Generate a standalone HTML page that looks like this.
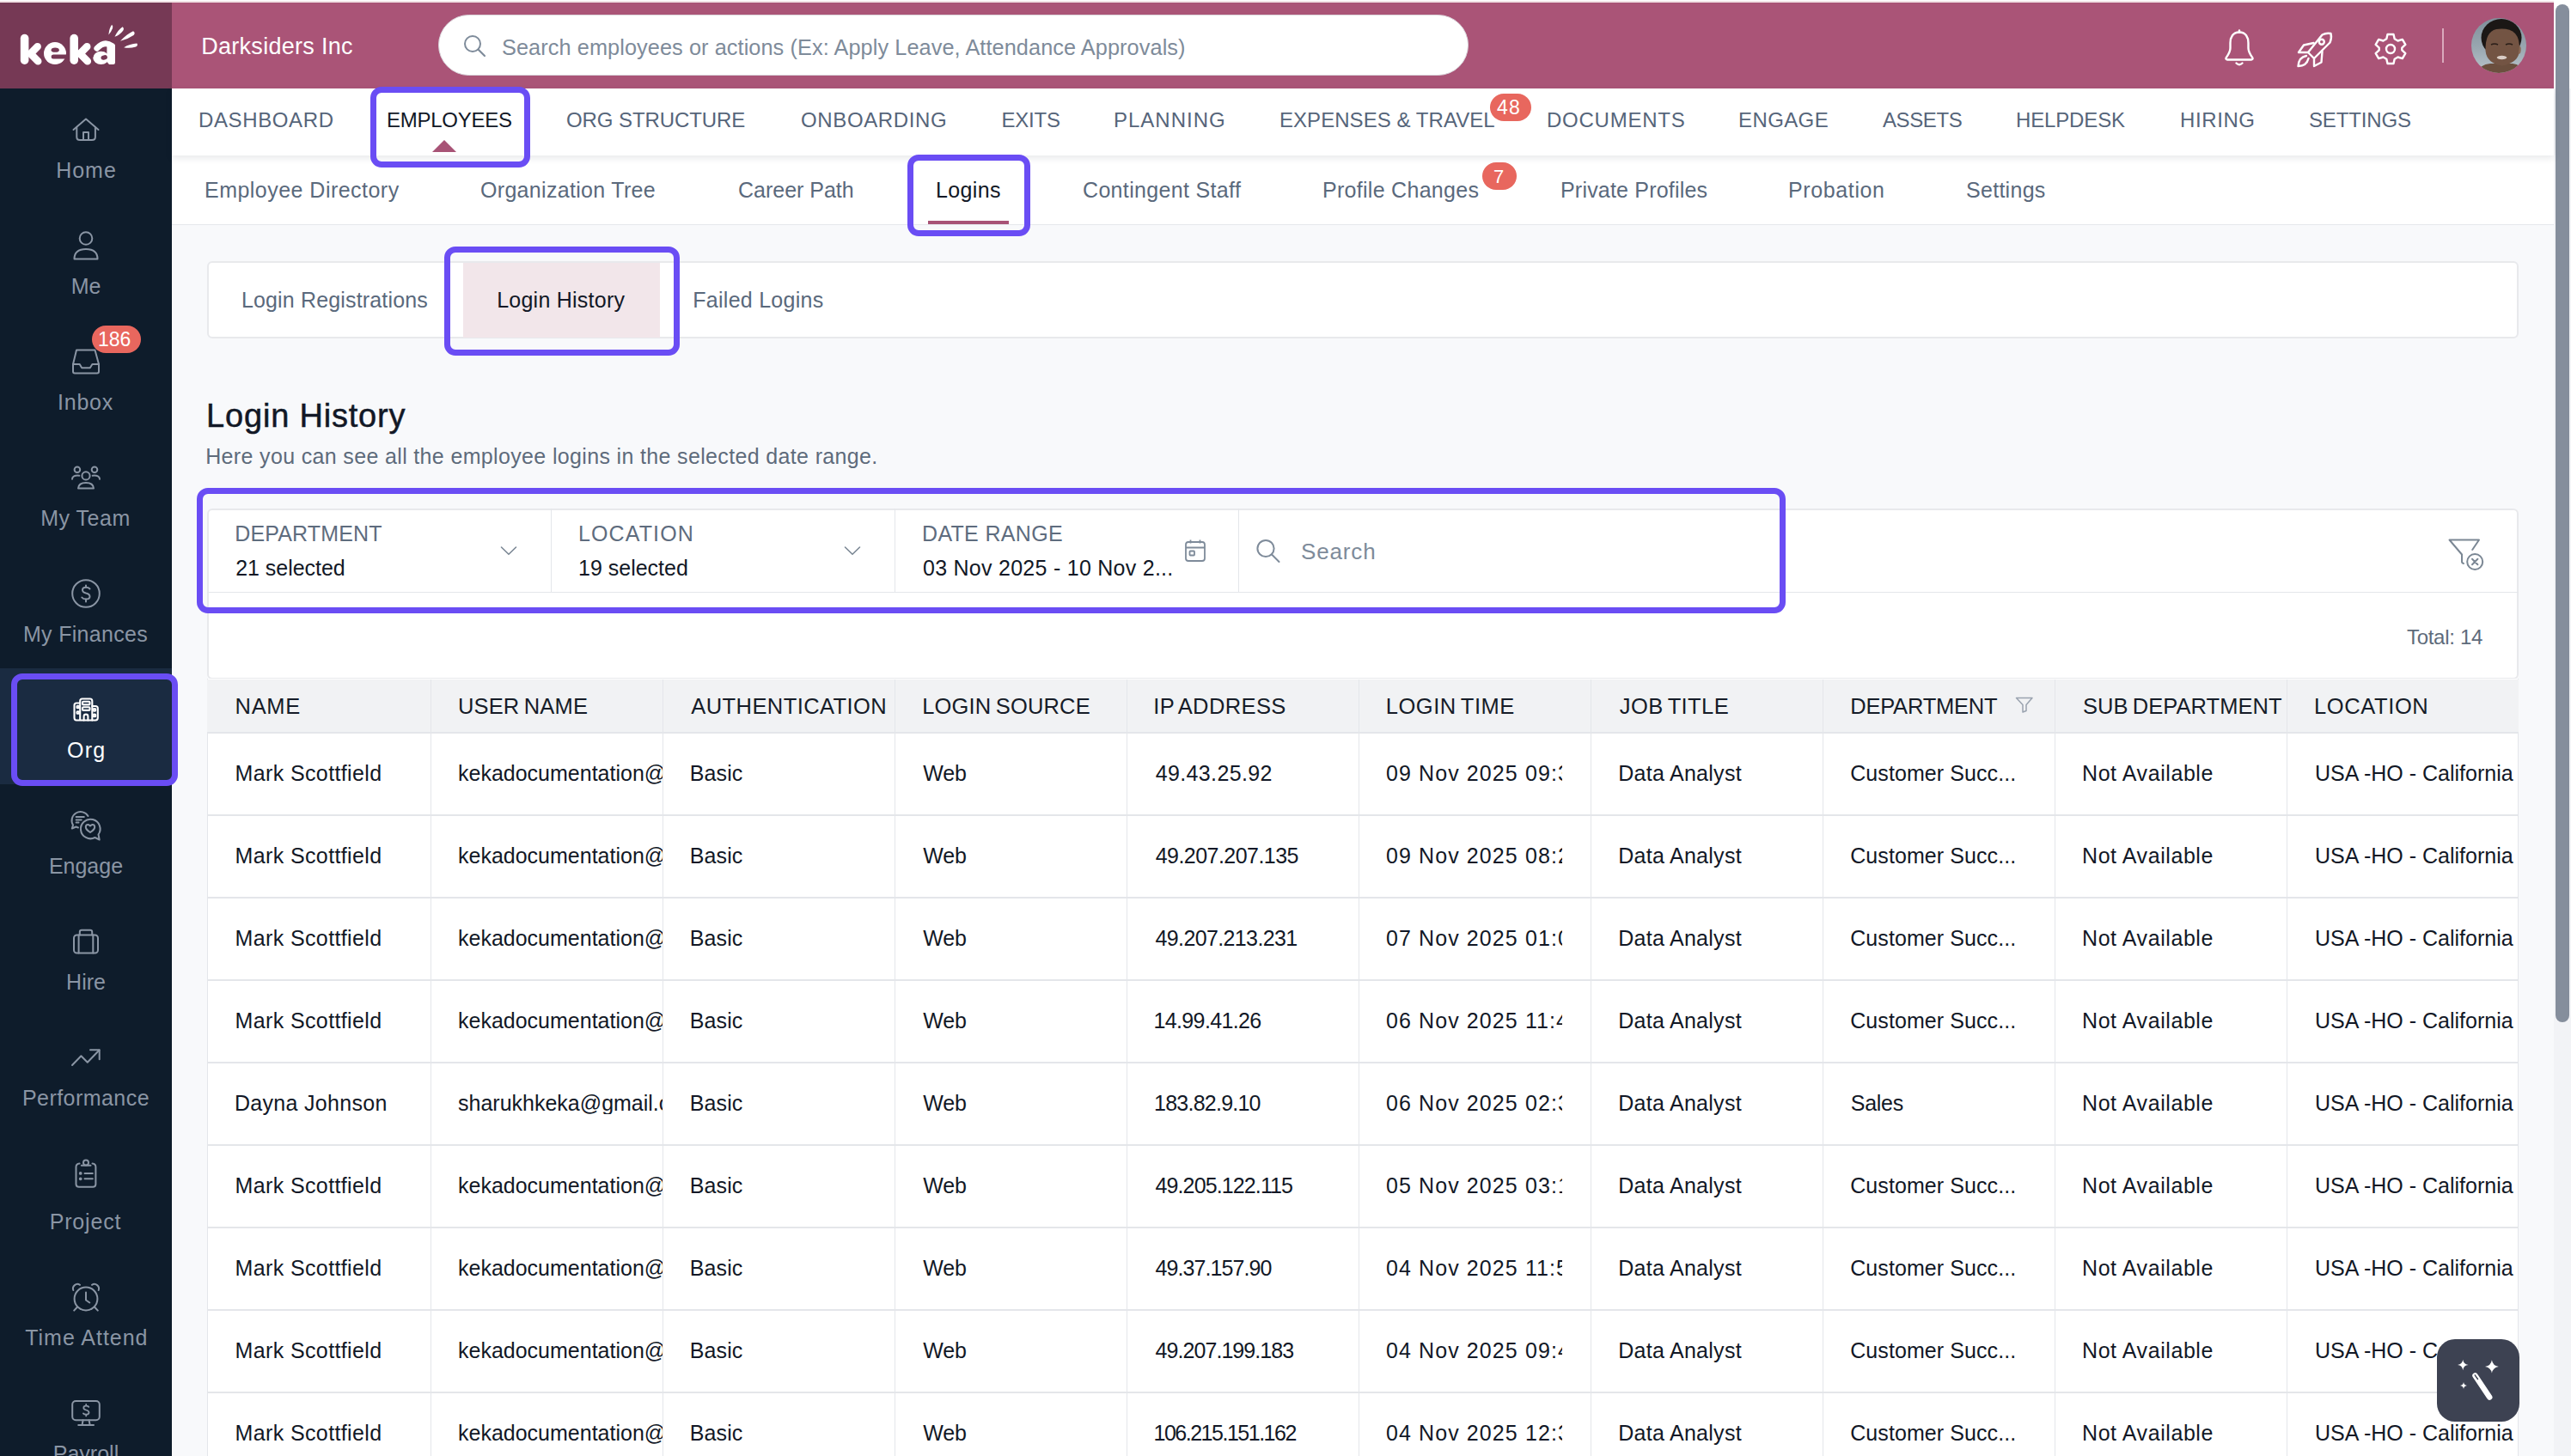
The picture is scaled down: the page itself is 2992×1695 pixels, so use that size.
<!DOCTYPE html>
<html><head><meta charset="utf-8"><title>Login History</title><style>
*{box-sizing:border-box;margin:0;padding:0}
html,body{width:2992px;height:1695px;overflow:hidden;background:#F8F9FB;font-family:"Liberation Sans",sans-serif;}
.a{position:absolute}
.t{position:absolute;white-space:nowrap;line-height:1}
svg{position:absolute;overflow:visible}
</style></head><body>
<div class="a" style="left:0px;top:0px;width:2992px;height:3px;background:linear-gradient(#fff 0,#fff 1px,#F2E2E5 1px)"></div>
<div class="a" style="left:0px;top:3px;width:200px;height:100px;background:#763955"></div>
<div class="a" style="left:200px;top:3px;width:2772px;height:100px;background:#AA5477"></div>
<svg style="left:0;top:0" width="200" height="103" viewBox="0 0 200 103">
<g stroke="#fff" stroke-linecap="round" stroke-linejoin="round" fill="none">
<path d="M28.6 44.6 V70.2" stroke-width="9.6"/>
<path d="M43.6 54.2 L35.5 62.5 L44.2 71.2" stroke-width="8.6"/>
<path d="M86.2 44.6 V70.2" stroke-width="9.6"/>
<path d="M101.2 54.2 L93.1 62.5 L101.8 71.2" stroke-width="8.6"/>
</g>
<g fill="#fff">
<circle cx="64" cy="62.1" r="13"/>
<ellipse cx="117.6" cy="67.4" rx="9.3" ry="7.6"/>
<path d="M124.4 53 H134 V72.8 Q134 75 131.8 75 H127 Q125 73.5 124.4 71 Z"/>
</g>
<path d="M112.8 56.3 Q121.5 46.8 130.5 53.5" stroke="#fff" stroke-width="6.8" fill="none" stroke-linecap="round"/>
<g fill="#763955">
<ellipse cx="64.2" cy="58.2" rx="4.6" ry="2.6"/>
<path d="M62 63.6 H80 V68.6 H62 Q59.6 68.6 59.6 66.1 Q59.6 63.6 62 63.6Z"/>
<ellipse cx="121.2" cy="66.9" rx="3.8" ry="2.6" transform="rotate(-15 121.2 66.9)"/>
</g>
<g fill="#fff">
<path d="M126.4 40.5 Q127 33 130.1 28.7 Q132 30 131 33 Q129 38 126.4 40.5Z"/>
<path d="M133.5 42.7 Q137 35 142.6 31.2 Q145 33 143 36 Q139 41 133.5 42.7Z"/>
<path d="M140 47.7 Q147 40 155 36.2 Q158 38 155.5 41 Q149 45.5 140 47.7Z"/>
<path d="M144.1 55.2 Q151 51 159.4 50.5 Q161 53 158 54.5 Q151 56.5 144.1 55.2Z"/>
</g></svg>
<div class="t" style="left:234.2px;top:41.0px;font-size:27px;color:#fff;letter-spacing:0.288px;">Darksiders Inc</div>
<div class="a" style="left:510px;top:17px;width:1199px;height:71px;background:#fff;border-radius:36px;border:1px solid #D9D4DA"></div>
<svg style="left:539px;top:40px" width="26" height="26" viewBox="0 0 26 26"><circle cx="11" cy="11" r="9" fill="none" stroke="#7E8B9A" stroke-width="2"/><path d="M17.5 17.5 L25 25" stroke="#7E8B9A" stroke-width="2.2" stroke-linecap="round"/></svg>
<div class="t" style="left:584.0px;top:42.5px;font-size:25.3px;color:#7E8B9A;letter-spacing:0.079px;">Search employees or actions (Ex: Apply Leave, Attendance Approvals)</div>
<svg style="left:2588px;top:34px" width="36" height="44" viewBox="0 0 36 44" fill="none" stroke="#fff" stroke-width="2.4" stroke-linejoin="round" stroke-linecap="round">
<path d="M18 3.5 V1.5"/><path d="M18 3.5 C10.5 3.5 7.5 9.5 7.5 16 V22 C7.5 27 4 31 2.5 33.5 C2.2 34.5 2.8 35.5 4 35.5 H32 C33.2 35.5 33.8 34.5 33.5 33.5 C32 31 28.5 27 28.5 22 V16 C28.5 9.5 25.5 3.5 18 3.5Z"/><path d="M14.5 39.5 Q18 43 21.5 39.5"/></svg>
<svg style="left:2673px;top:37px" width="42" height="42" viewBox="0 0 42 42" fill="none" stroke="#fff" stroke-width="2.4" stroke-linejoin="round" stroke-linecap="round">
<path d="M13 24 L20 31 L38.5 12.5 C40.5 8 40 4 39.5 2 C37 1.5 33 1.5 29.5 3.5 Z"/><circle cx="28.8" cy="11.8" r="3"/><path d="M13 24 L2 24 L8 15.5 L19.5 13"/><path d="M20 31 L20 40 L28.5 35.5 L29.5 23"/><path d="M11 28 C5 29 2 33 1.5 40 C8 40 12 37 13.5 31"/></svg>
<svg style="left:2764px;top:38px" width="36" height="38" viewBox="0 0 36 38" fill="none" stroke="#fff" stroke-width="2.4" stroke-linejoin="round">
<path d="M14.5 2 H21.5 L22.7 7.3 L26.5 9.5 L31.8 7.9 L35.3 13.9 L31.3 17.7 V20.3 L35.3 24.1 L31.8 30.1 L26.5 28.5 L22.7 30.7 L21.5 36 H14.5 L13.3 30.7 L9.5 28.5 L4.2 30.1 L0.7 24.1 L4.7 20.3 V17.7 L0.7 13.9 L4.2 7.9 L9.5 9.5 L13.3 7.3 Z"/><circle cx="18" cy="19" r="5"/></svg>
<div class="a" style="left:2842px;top:33px;width:2px;height:40px;background:#D9A9BC"></div>
<svg style="left:2876px;top:21px" width="64" height="64" viewBox="0 0 64 64"><defs><clipPath id="av"><circle cx="32" cy="32" r="32"/></clipPath><linearGradient id="avbg" x1="0" y1="0" x2="0" y2="1"><stop offset="0" stop-color="#7F8F9A"/><stop offset="0.55" stop-color="#9AA8B1"/><stop offset="1" stop-color="#B9C5CC"/></linearGradient></defs>
<g clip-path="url(#av)"><rect width="64" height="64" fill="url(#avbg)"/>
<path d="M6 64 Q10 54 22 53 H48 Q58 54 62 64Z" fill="#6B4F3E"/>
<ellipse cx="35" cy="23" rx="23.5" ry="22" fill="#1B1715"/>
<path d="M16.5 38 Q16 16 29 13 Q44 11 51 18 Q56.5 24 56 38 Q55 52 36 55.5 Q18 53 16.5 38Z" fill="#735443"/>
<path d="M56 32 Q59 34 57 41 L55 42Z" fill="#8A6A55"/>
<path d="M23 31 Q27 29 31 31 M40 31 Q44 29 48 31" stroke="#2A1E18" stroke-width="1.6" fill="none"/>
<ellipse cx="35.5" cy="46" rx="5.8" ry="2.2" fill="#D9CCC5"/>
</g></svg>
<div class="a" style="left:2972px;top:0px;width:20px;height:1695px;background:#F2F3F6"></div>
<div class="a" style="left:2972px;top:0px;width:20px;height:103px;background:#fff"></div>
<div class="a" style="left:2974px;top:5px;width:16px;height:1185px;background:#858E9C;border-radius:8px"></div>
<div class="a" style="left:0px;top:103px;width:200px;height:1592px;background:#0E1C2B"></div>
<div class="a" style="left:200px;top:181px;width:2772px;height:81px;background:#fff;border-bottom:1px solid #E6E8EC"></div>
<div class="a" style="left:200px;top:103px;width:2772px;height:78px;background:#fff;box-shadow:0 3px 8px rgba(20,30,50,0.10);z-index:2"></div>
<div class="t" style="left:231.0px;top:127.6px;font-size:24px;color:#56657A;letter-spacing:0.625px;z-index:3;">DASHBOARD</div>
<div class="t" style="left:450.0px;top:127.6px;font-size:24px;color:#121826;letter-spacing:-0.25px;z-index:3;">EMPLOYEES</div>
<div class="t" style="left:659.0px;top:127.6px;font-size:24px;color:#56657A;letter-spacing:-0.083px;z-index:3;">ORG STRUCTURE</div>
<div class="t" style="left:932.0px;top:127.6px;font-size:24px;color:#56657A;letter-spacing:0.638px;z-index:3;">ONBOARDING</div>
<div class="t" style="left:1165.4px;top:127.6px;font-size:24px;color:#56657A;letter-spacing:-0.2px;z-index:3;">EXITS</div>
<div class="t" style="left:1296.0px;top:127.6px;font-size:24px;color:#56657A;letter-spacing:1.0px;z-index:3;">PLANNING</div>
<div class="t" style="left:1489.0px;top:127.6px;font-size:24px;color:#56657A;letter-spacing:0.05px;z-index:3;">EXPENSES &amp; TRAVEL</div>
<div class="t" style="left:1800.0px;top:127.6px;font-size:24px;color:#56657A;letter-spacing:0.75px;z-index:3;">DOCUMENTS</div>
<div class="t" style="left:2023.0px;top:127.6px;font-size:24px;color:#56657A;letter-spacing:0.4px;z-index:3;">ENGAGE</div>
<div class="t" style="left:2191.0px;top:127.6px;font-size:24px;color:#56657A;letter-spacing:-0.4px;z-index:3;">ASSETS</div>
<div class="t" style="left:2346.0px;top:127.6px;font-size:24px;color:#56657A;letter-spacing:-0.143px;z-index:3;">HELPDESK</div>
<div class="t" style="left:2537.0px;top:127.6px;font-size:24px;color:#56657A;letter-spacing:0.6px;z-index:3;">HIRING</div>
<div class="t" style="left:2687.0px;top:127.6px;font-size:24px;color:#56657A;letter-spacing:-0.143px;z-index:3;">SETTINGS</div>
<svg style="left:503px;top:163px;z-index:3" width="28" height="14" viewBox="0 0 28 14"><path d="M14 0 L28 14 H0Z" fill="#A85376"/></svg>
<div class="a" style="left:1734px;top:109px;width:48px;height:32px;border-radius:16px;background:#E8675E;z-index:3"></div>
<div class="t" style="left:1742.0px;top:114.0px;font-size:23px;color:#fff;letter-spacing:1.2px;z-index:4;">48</div>
<div class="t" style="left:238.0px;top:209.2px;font-size:25px;color:#5A697C;letter-spacing:0.471px;">Employee Directory</div>
<div class="t" style="left:559.0px;top:209.2px;font-size:25px;color:#5A697C;letter-spacing:0.312px;">Organization Tree</div>
<div class="t" style="left:859.0px;top:209.2px;font-size:25px;color:#5A697C;letter-spacing:-0.01px;">Career Path</div>
<div class="t" style="left:1089.0px;top:209.2px;font-size:25px;color:#121826;letter-spacing:0.35px;">Logins</div>
<div class="t" style="left:1260.0px;top:209.2px;font-size:25px;color:#5A697C;letter-spacing:0.333px;">Contingent Staff</div>
<div class="t" style="left:1539.0px;top:209.2px;font-size:25px;color:#5A697C;letter-spacing:0.286px;">Profile Changes</div>
<div class="t" style="left:1816.0px;top:209.2px;font-size:25px;color:#5A697C;letter-spacing:0.2px;">Private Profiles</div>
<div class="t" style="left:2081.0px;top:209.2px;font-size:25px;color:#5A697C;letter-spacing:0.625px;">Probation</div>
<div class="t" style="left:2288.0px;top:209.2px;font-size:25px;color:#5A697C;letter-spacing:0.286px;">Settings</div>
<div class="a" style="left:1080px;top:257px;width:94px;height:4px;background:#A85376"></div>
<div class="a" style="left:1725px;top:189px;width:40px;height:32px;border-radius:16px;background:#E8675E"></div>
<div class="t" style="left:1738.0px;top:195.3px;font-size:22px;color:#fff;">7</div>
<div class="a" style="left:0px;top:778px;width:200px;height:135px;background:#1A2B41"></div>
<div class="t" style="left:0.5px;top:185.8px;font-size:25px;color:#8A95A4;letter-spacing:1.0px;width:200px;text-align:center;">Home</div>
<div class="t" style="left:0.0px;top:320.8px;font-size:25px;color:#8A95A4;width:200px;text-align:center;">Me</div>
<div class="t" style="left:-0.5px;top:456.2px;font-size:25px;color:#8A95A4;letter-spacing:0.75px;width:200px;text-align:center;">Inbox</div>
<div class="t" style="left:-0.5px;top:590.8px;font-size:25px;color:#8A95A4;letter-spacing:0.5px;width:200px;text-align:center;">My Team</div>
<div class="t" style="left:-0.5px;top:726.4px;font-size:25px;color:#8A95A4;letter-spacing:0.3px;width:200px;text-align:center;">My Finances</div>
<div class="t" style="left:0.8px;top:860.8px;font-size:25px;color:#FFFFFF;letter-spacing:1.25px;width:200px;text-align:center;">Org</div>
<div class="t" style="left:0.0px;top:995.8px;font-size:25px;color:#8A95A4;width:200px;text-align:center;">Engage</div>
<div class="t" style="left:0.0px;top:1130.8px;font-size:25px;color:#8A95A4;width:200px;text-align:center;">Hire</div>
<div class="t" style="left:-0.0px;top:1265.8px;font-size:25px;color:#8A95A4;letter-spacing:0.445px;width:200px;text-align:center;">Performance</div>
<div class="t" style="left:-0.5px;top:1409.8px;font-size:25px;color:#8A95A4;letter-spacing:0.834px;width:200px;text-align:center;">Project</div>
<div class="t" style="left:0.9px;top:1544.8px;font-size:25px;color:#8A95A4;letter-spacing:0.98px;width:200px;text-align:center;">Time Attend</div>
<div class="t" style="left:0.0px;top:1679.8px;font-size:25px;color:#8A95A4;width:200px;text-align:center;">Payroll</div>
<svg style="left:0;top:0" width="200" height="1695" viewBox="0 0 200 1695" fill="none" stroke="#8A95A4" stroke-width="2" stroke-linecap="round" stroke-linejoin="round">
<path d="M85.5 151 L100 138.5 L114.5 151"/><path d="M89.3 148.5 V159.5 Q89.3 163 93 163 H107 Q110.9 163 110.9 159.5 V148.5"/><path d="M97 163 V154 H103 V163"/>
<circle cx="100" cy="277.5" r="7.3"/><path d="M86.5 301.5 Q86.5 290 100 290 Q113.5 290 113.5 301.5 Z"/>
<path d="M89 407.5 H110.5 L115 424 V432.5 Q115 434.5 113 434.5 H87 Q85 434.5 85 432.5 V424 Z"/><path d="M85 424 H92.7 L95.2 428.3 H104.8 L107.4 424 H115"/>
<circle cx="89.9" cy="546.8" r="3.3"/><circle cx="110" cy="546.8" r="3.3"/><circle cx="100" cy="553.9" r="4.6"/>
<path d="M92.3 553.7 Q84 553 84 557.8"/><path d="M107.7 553.7 Q116 553 116 557.8"/><path d="M91 568.5 Q91.5 562 100 562 Q108.5 562 109 568.5 Z"/>
<circle cx="100" cy="691" r="15.8"/><path d="M104.5 685.5 Q103 683.8 100 683.8 Q96 683.8 96 686.8 Q96 689.5 100 690.5 Q104.5 691.5 104.5 694.5 Q104.5 697.5 100 697.5 Q96.8 697.5 95.3 695.5"/><path d="M100 681.5 V683.8 M100 697.5 V700.5"/>
<g stroke="#fff" stroke-width="2.1"><path d="M93.2 818.5 H89 Q86.5 818.5 86.5 821 V835.5 Q86.5 838.5 89 838.5 H111 Q113.8 838.5 113.8 835.5 V824.5 Q113.8 822 111 822 H107.3 V816 Q107.3 813.5 104.8 813.5 H95.7 Q93.2 813.5 93.2 816 V838.5"/><path d="M107.3 822 V838.5"/><rect x="96" y="816.8" width="8.5" height="3.6" rx="1"/><rect x="96" y="823.3" width="8.5" height="3.6" rx="1"/><rect x="89.5" y="821.7" width="2.6" height="2.6" rx="0.8"/><rect x="89.5" y="828.2" width="2.6" height="2.6" rx="0.8"/><rect x="108.6" y="825" width="2.6" height="2.6" rx="0.8"/><rect x="108.6" y="831.6" width="2.6" height="2.6" rx="0.8"/><path d="M97.6 838.5 V834 Q97.6 831.6 100 831.6 Q102.4 831.6 102.4 834 V838.5"/></g>
<path d="M102.5 950 A10 10 0 1 0 85 960.5 L83.8 964.5 L88.5 962.5 L91 963.5"/><path d="M88.6 950.9 H97.8 M88.6 954.4 H94.7 M88.6 957.6 H91.5"/><path d="M114.5 971.5 A11.3 11.3 0 1 0 110.5 975 L115.7 977.5 Z"/><path d="M105 969 Q99.5 965.5 99.8 962.5 Q100.3 959.5 102.7 960 Q104 960.3 105 961.5 Q106 960.3 107.3 960 Q109.7 959.5 110.2 962.5 Q110.5 965.5 105 969Z"/>
<rect x="86" y="1088.5" width="28" height="21" rx="3.5"/><path d="M92.8 1088.5 V1085 Q92.8 1082.8 95 1082.8 H105 Q107.2 1082.8 107.2 1085 V1088.5"/><path d="M91.6 1088.5 V1109.5 M108.3 1088.5 V1109.5"/>
<path d="M84 1240 L94.4 1229.2 L101.8 1236.8 L115.5 1222.5"/><path d="M105 1222.3 H115.7 V1233.3"/>
<path d="M92.5 1354.5 Q88.5 1355 88.5 1358.5 V1378.5 Q88.5 1381.7 92 1381.7 H108 Q111.4 1381.7 111.4 1378.5 V1358.5 Q111.4 1355 107.5 1354.5"/><circle cx="100" cy="1353.4" r="3"/><path d="M94.8 1356.8 H105.5"/><path d="M98.5 1365.9 H107.8 M98.5 1372.3 H107.8"/><circle cx="93.7" cy="1365.9" r="0.9" fill="#8A95A4"/><circle cx="93.7" cy="1372.3" r="0.9" fill="#8A95A4"/>
<circle cx="100" cy="1512" r="13.4"/><path d="M85.3 1502 A5.2 5.2 0 0 1 93 1495.8"/><path d="M114.7 1502 A5.2 5.2 0 0 0 107 1495.8"/><path d="M89.8 1521.8 L86.2 1525.6 M110.2 1521.8 L113.8 1525.6"/><path d="M100 1504.5 V1513.5 L104.3 1516.5"/>
<rect x="84.2" y="1631" width="31.6" height="22.2" rx="4"/><path d="M96.6 1653.2 L95.6 1658.8 M103.6 1653.2 L104.6 1658.8 M91.2 1659 H109"/><path d="M103.3 1637.8 Q102.3 1636.7 100.2 1636.7 Q97.3 1636.7 97.3 1639 Q97.3 1640.8 100.2 1641.5 Q103.5 1642.3 103.5 1644.5 Q103.5 1646.7 100.2 1646.7 Q97.9 1646.7 96.9 1645.4 M100.2 1635 V1636.7 M100.2 1646.7 V1648.4" stroke-width="1.8"/>
</svg>
<div class="a" style="left:106.5px;top:379px;width:57.5px;height:32px;border-radius:16px;background:#E8675E"></div>
<div class="t" style="left:114.0px;top:384.4px;font-size:23px;color:#fff;">186</div>
<div class="a" style="left:241px;top:304px;width:2690px;height:90px;background:#fff;border:2px solid #E8E9EC;border-radius:6px"></div>
<div class="a" style="left:539px;top:305.5px;width:229px;height:87.5px;background:#F2E6EA"></div>
<div class="t" style="left:280.9px;top:337.4px;font-size:25px;color:#5A697C;letter-spacing:0.16px;">Login Registrations</div>
<div class="t" style="left:578.2px;top:337.4px;font-size:25px;color:#121826;letter-spacing:0.238px;">Login History</div>
<div class="t" style="left:806.3px;top:337.4px;font-size:25px;color:#5A697C;letter-spacing:0.266px;">Failed Logins</div>
<div class="t" style="left:240.1px;top:465.3px;font-size:38px;color:#121826;letter-spacing:0.805px;-webkit-text-stroke:0.5px #121826;">Login History</div>
<div class="t" style="left:239.2px;top:518.6px;font-size:25px;color:#5E6B7B;letter-spacing:0.347px;">Here you can see all the employee logins in the selected date range.</div>
<div class="a" style="left:241px;top:592px;width:2690px;height:199px;background:#fff;border:2px solid #E8E9EC;border-radius:6px"></div>
<div class="a" style="left:241px;top:688.5px;width:2690px;height:1.5px;background:#E4E6EA"></div>
<div class="a" style="left:640.5px;top:592px;width:1.5px;height:97px;background:#E4E6EA"></div>
<div class="a" style="left:1040.5px;top:592px;width:1.5px;height:97px;background:#E4E6EA"></div>
<div class="a" style="left:1440.5px;top:592px;width:1.5px;height:97px;background:#E4E6EA"></div>
<div class="t" style="left:273.2px;top:609.0px;font-size:25px;color:#5E6C7E;letter-spacing:0.166px;">DEPARTMENT</div>
<div class="t" style="left:274.2px;top:648.9px;font-size:25px;color:#121826;letter-spacing:-0.04px;">21 selected</div>
<div class="t" style="left:672.9px;top:609.0px;font-size:25px;color:#5E6C7E;letter-spacing:1.137px;">LOCATION</div>
<div class="t" style="left:673.0px;top:648.9px;font-size:25px;color:#121826;">19 selected</div>
<div class="t" style="left:1073.0px;top:609.0px;font-size:25px;color:#5E6C7E;letter-spacing:0.323px;">DATE RANGE</div>
<div class="t" style="left:1074.0px;top:648.9px;font-size:25px;color:#121826;letter-spacing:0.266px;">03 Nov 2025 - 10 Nov 2...</div>
<svg style="left:0;top:0" width="2992" height="1695" viewBox="0 0 2992 1695"><path d="M583.5 637 L592 645.3 L600.5 637" stroke="#7B8794" stroke-width="1.6" fill="none" stroke-linecap="round" stroke-linejoin="round"/><path d="M983.5 637 L992 645.3 L1000.5 637" stroke="#7B8794" stroke-width="1.6" fill="none" stroke-linecap="round" stroke-linejoin="round"/><g fill="none" stroke="#7E8B9A" stroke-width="1.8" stroke-linejoin="round"><rect x="1380" y="631" width="22" height="22" rx="3"/><path d="M1380 637.5 H1402 M1385.5 628.5 V632.5 M1396.5 628.5 V632.5"/><rect x="1384.5" y="641.5" width="5.5" height="5" rx="0.8"/></g><g fill="none" stroke="#7E8B9A" stroke-width="2" stroke-linecap="round"><circle cx="1473" cy="638.5" r="9.6"/><path d="M1480 645.5 L1488.5 654"/></g><g fill="none" stroke="#7B8794" stroke-width="2" stroke-linejoin="round" stroke-linecap="round"><path d="M2877.2 640 L2885 628.5 H2850.5 L2865 645.5 V653.8 Q2865 655.6 2867 656"/><circle cx="2880.2" cy="654" r="9"/><path d="M2877 650.8 L2883.4 657.2 M2883.4 650.8 L2877 657.2"/></g></svg>
<div class="t" style="left:1514.0px;top:629.4px;font-size:26px;color:#7E8B9A;letter-spacing:0.86px;">Search</div>
<div class="t" style="left:2801.0px;top:729.6px;font-size:24px;color:#5E6B7B;letter-spacing:-0.3px;">Total: 14</div>
<div class="a" style="left:241px;top:790px;width:2690px;height:905px;background:#fff;border-left:1.5px solid #E4E6EA;border-right:1.5px solid #E4E6EA"></div>
<div class="a" style="left:241px;top:791px;width:2690px;height:61.5px;background:#F1F2F4"></div>
<div class="a" style="left:241px;top:852px;width:2690px;height:1.5px;background:#E4E6EA"></div>
<div class="a" style="left:241px;top:948px;width:2690px;height:1.5px;background:#E4E6EA"></div>
<div class="a" style="left:241px;top:1044px;width:2690px;height:1.5px;background:#E4E6EA"></div>
<div class="a" style="left:241px;top:1140px;width:2690px;height:1.5px;background:#E4E6EA"></div>
<div class="a" style="left:241px;top:1236px;width:2690px;height:1.5px;background:#E4E6EA"></div>
<div class="a" style="left:241px;top:1332px;width:2690px;height:1.5px;background:#E4E6EA"></div>
<div class="a" style="left:241px;top:1428px;width:2690px;height:1.5px;background:#E4E6EA"></div>
<div class="a" style="left:241px;top:1524px;width:2690px;height:1.5px;background:#E4E6EA"></div>
<div class="a" style="left:241px;top:1620px;width:2690px;height:1.5px;background:#E4E6EA"></div>
<div class="a" style="left:500.5px;top:791px;width:1.5px;height:904px;background:#E4E6EA"></div>
<div class="a" style="left:770.5px;top:791px;width:1.5px;height:904px;background:#E4E6EA"></div>
<div class="a" style="left:1040.5px;top:791px;width:1.5px;height:904px;background:#E4E6EA"></div>
<div class="a" style="left:1310.5px;top:791px;width:1.5px;height:904px;background:#E4E6EA"></div>
<div class="a" style="left:1580.5px;top:791px;width:1.5px;height:904px;background:#E4E6EA"></div>
<div class="a" style="left:1850.5px;top:791px;width:1.5px;height:904px;background:#E4E6EA"></div>
<div class="a" style="left:2120.5px;top:791px;width:1.5px;height:904px;background:#E4E6EA"></div>
<div class="a" style="left:2390.5px;top:791px;width:1.5px;height:904px;background:#E4E6EA"></div>
<div class="a" style="left:2660.5px;top:791px;width:1.5px;height:904px;background:#E4E6EA"></div>
<div class="t" style="left:273.6px;top:809.8px;font-size:25.5px;color:#161C28;letter-spacing:0.667px;word-spacing:-2px;">NAME</div>
<div class="t" style="left:532.9px;top:809.8px;font-size:25.5px;color:#161C28;letter-spacing:0.179px;word-spacing:-2px;">USER NAME</div>
<div class="t" style="left:804.3px;top:809.8px;font-size:25.5px;color:#161C28;letter-spacing:0.418px;word-spacing:-2px;">AUTHENTICATION</div>
<div class="t" style="left:1073.2px;top:809.8px;font-size:25.5px;color:#161C28;letter-spacing:0.182px;word-spacing:-2px;">LOGIN SOURCE</div>
<div class="t" style="left:1342.2px;top:809.8px;font-size:25.5px;color:#161C28;letter-spacing:0.4px;word-spacing:-2px;">IP ADDRESS</div>
<div class="t" style="left:1612.8px;top:809.8px;font-size:25.5px;color:#161C28;letter-spacing:0.506px;word-spacing:-2px;">LOGIN TIME</div>
<div class="t" style="left:1884.8px;top:809.8px;font-size:25.5px;color:#161C28;letter-spacing:0.406px;word-spacing:-2px;">JOB TITLE</div>
<div class="t" style="left:2153.2px;top:809.8px;font-size:25.5px;color:#161C28;letter-spacing:-0.207px;word-spacing:-2px;">DEPARTMENT</div>
<div class="t" style="left:2424.0px;top:809.8px;font-size:25.5px;color:#161C28;letter-spacing:0.061px;word-spacing:-2px;">SUB DEPARTMENT</div>
<div class="t" style="left:2693.0px;top:809.8px;font-size:25.5px;color:#161C28;letter-spacing:0.615px;word-spacing:-2px;">LOCATION</div>
<svg style="left:2344px;top:810px" width="24" height="22" viewBox="0 0 24 22"><path d="M2.5 2.5 H21 L14 10.5 V17.5 L10 19 V10.5 Z" fill="none" stroke="#9AA3AF" stroke-width="1.5" stroke-linejoin="round"/></svg>
<div class="t" style="left:273.6px;top:887.5px;font-size:25px;color:#121826;letter-spacing:0.372px;">Mark Scottfield</div>
<div class="t" style="left:533.0px;top:887.5px;font-size:25px;color:#121826;width:237.5px;overflow:hidden;">kekadocumentation@gmail.com</div>
<div class="t" style="left:802.8px;top:887.5px;font-size:25px;color:#121826;letter-spacing:0.1px;">Basic</div>
<div class="t" style="left:1074.2px;top:887.5px;font-size:25px;color:#121826;letter-spacing:-0.15px;">Web</div>
<div class="t" style="left:1344.7px;top:887.5px;font-size:25px;color:#121826;letter-spacing:0.37px;">49.43.25.92</div>
<div class="t" style="left:1613.0px;top:887.5px;font-size:25px;color:#121826;letter-spacing:1.1px;width:204.70000000000005px;overflow:hidden;">09 Nov 2025 09:30 AM</div>
<div class="t" style="left:1883.2px;top:887.5px;font-size:25px;color:#121826;letter-spacing:0.278px;">Data Analyst</div>
<div class="t" style="left:2153.2px;top:887.5px;font-size:25px;color:#121826;letter-spacing:0.084px;">Customer Succ...</div>
<div class="t" style="left:2423.0px;top:887.5px;font-size:25px;color:#121826;letter-spacing:0.578px;">Not Available</div>
<div class="t" style="left:2694.0px;top:887.5px;font-size:25px;color:#121826;letter-spacing:0.003px;">USA -HO - California</div>
<div class="t" style="left:273.6px;top:983.5px;font-size:25px;color:#121826;letter-spacing:0.372px;">Mark Scottfield</div>
<div class="t" style="left:533.0px;top:983.5px;font-size:25px;color:#121826;width:237.5px;overflow:hidden;">kekadocumentation@gmail.com</div>
<div class="t" style="left:802.8px;top:983.5px;font-size:25px;color:#121826;letter-spacing:0.1px;">Basic</div>
<div class="t" style="left:1074.2px;top:983.5px;font-size:25px;color:#121826;letter-spacing:-0.15px;">Web</div>
<div class="t" style="left:1344.7px;top:983.5px;font-size:25px;color:#121826;letter-spacing:-0.54px;">49.207.207.135</div>
<div class="t" style="left:1613.0px;top:983.5px;font-size:25px;color:#121826;letter-spacing:1.1px;width:204.70000000000005px;overflow:hidden;">09 Nov 2025 08:21 AM</div>
<div class="t" style="left:1883.2px;top:983.5px;font-size:25px;color:#121826;letter-spacing:0.278px;">Data Analyst</div>
<div class="t" style="left:2153.2px;top:983.5px;font-size:25px;color:#121826;letter-spacing:0.084px;">Customer Succ...</div>
<div class="t" style="left:2423.0px;top:983.5px;font-size:25px;color:#121826;letter-spacing:0.578px;">Not Available</div>
<div class="t" style="left:2694.0px;top:983.5px;font-size:25px;color:#121826;letter-spacing:0.003px;">USA -HO - California</div>
<div class="t" style="left:273.6px;top:1079.5px;font-size:25px;color:#121826;letter-spacing:0.372px;">Mark Scottfield</div>
<div class="t" style="left:533.0px;top:1079.5px;font-size:25px;color:#121826;width:237.5px;overflow:hidden;">kekadocumentation@gmail.com</div>
<div class="t" style="left:802.8px;top:1079.5px;font-size:25px;color:#121826;letter-spacing:0.1px;">Basic</div>
<div class="t" style="left:1074.2px;top:1079.5px;font-size:25px;color:#121826;letter-spacing:-0.15px;">Web</div>
<div class="t" style="left:1344.5px;top:1079.5px;font-size:25px;color:#121826;letter-spacing:-0.623px;">49.207.213.231</div>
<div class="t" style="left:1613.0px;top:1079.5px;font-size:25px;color:#121826;letter-spacing:1.1px;width:204.70000000000005px;overflow:hidden;">07 Nov 2025 01:02 PM</div>
<div class="t" style="left:1883.2px;top:1079.5px;font-size:25px;color:#121826;letter-spacing:0.278px;">Data Analyst</div>
<div class="t" style="left:2153.2px;top:1079.5px;font-size:25px;color:#121826;letter-spacing:0.084px;">Customer Succ...</div>
<div class="t" style="left:2423.0px;top:1079.5px;font-size:25px;color:#121826;letter-spacing:0.578px;">Not Available</div>
<div class="t" style="left:2694.0px;top:1079.5px;font-size:25px;color:#121826;letter-spacing:0.003px;">USA -HO - California</div>
<div class="t" style="left:273.6px;top:1175.5px;font-size:25px;color:#121826;letter-spacing:0.372px;">Mark Scottfield</div>
<div class="t" style="left:533.0px;top:1175.5px;font-size:25px;color:#121826;width:237.5px;overflow:hidden;">kekadocumentation@gmail.com</div>
<div class="t" style="left:802.8px;top:1175.5px;font-size:25px;color:#121826;letter-spacing:0.1px;">Basic</div>
<div class="t" style="left:1074.2px;top:1175.5px;font-size:25px;color:#121826;letter-spacing:-0.15px;">Web</div>
<div class="t" style="left:1342.5px;top:1175.5px;font-size:25px;color:#121826;letter-spacing:-0.635px;">14.99.41.26</div>
<div class="t" style="left:1613.0px;top:1175.5px;font-size:25px;color:#121826;letter-spacing:1.1px;width:204.70000000000005px;overflow:hidden;">06 Nov 2025 11:48 AM</div>
<div class="t" style="left:1883.2px;top:1175.5px;font-size:25px;color:#121826;letter-spacing:0.278px;">Data Analyst</div>
<div class="t" style="left:2153.2px;top:1175.5px;font-size:25px;color:#121826;letter-spacing:0.084px;">Customer Succ...</div>
<div class="t" style="left:2423.0px;top:1175.5px;font-size:25px;color:#121826;letter-spacing:0.578px;">Not Available</div>
<div class="t" style="left:2694.0px;top:1175.5px;font-size:25px;color:#121826;letter-spacing:0.003px;">USA -HO - California</div>
<div class="t" style="left:273.0px;top:1271.5px;font-size:25px;color:#121826;letter-spacing:0.3px;">Dayna Johnson</div>
<div class="t" style="left:533.0px;top:1271.5px;font-size:25px;color:#121826;width:237.5px;overflow:hidden;">sharukhkeka@gmail.com</div>
<div class="t" style="left:802.8px;top:1271.5px;font-size:25px;color:#121826;letter-spacing:0.1px;">Basic</div>
<div class="t" style="left:1074.2px;top:1271.5px;font-size:25px;color:#121826;letter-spacing:-0.15px;">Web</div>
<div class="t" style="left:1343.0px;top:1271.5px;font-size:25px;color:#121826;letter-spacing:-0.755px;">183.82.9.10</div>
<div class="t" style="left:1613.0px;top:1271.5px;font-size:25px;color:#121826;letter-spacing:1.1px;width:204.70000000000005px;overflow:hidden;">06 Nov 2025 02:33 PM</div>
<div class="t" style="left:1883.2px;top:1271.5px;font-size:25px;color:#121826;letter-spacing:0.278px;">Data Analyst</div>
<div class="t" style="left:2153.8px;top:1271.5px;font-size:25px;color:#121826;letter-spacing:-0.275px;">Sales</div>
<div class="t" style="left:2423.0px;top:1271.5px;font-size:25px;color:#121826;letter-spacing:0.578px;">Not Available</div>
<div class="t" style="left:2694.0px;top:1271.5px;font-size:25px;color:#121826;letter-spacing:0.003px;">USA -HO - California</div>
<div class="t" style="left:273.6px;top:1367.5px;font-size:25px;color:#121826;letter-spacing:0.372px;">Mark Scottfield</div>
<div class="t" style="left:533.0px;top:1367.5px;font-size:25px;color:#121826;width:237.5px;overflow:hidden;">kekadocumentation@gmail.com</div>
<div class="t" style="left:802.8px;top:1367.5px;font-size:25px;color:#121826;letter-spacing:0.1px;">Basic</div>
<div class="t" style="left:1074.2px;top:1367.5px;font-size:25px;color:#121826;letter-spacing:-0.15px;">Web</div>
<div class="t" style="left:1344.5px;top:1367.5px;font-size:25px;color:#121826;letter-spacing:-0.878px;">49.205.122.115</div>
<div class="t" style="left:1613.0px;top:1367.5px;font-size:25px;color:#121826;letter-spacing:1.1px;width:204.70000000000005px;overflow:hidden;">05 Nov 2025 03:13 PM</div>
<div class="t" style="left:1883.2px;top:1367.5px;font-size:25px;color:#121826;letter-spacing:0.278px;">Data Analyst</div>
<div class="t" style="left:2153.2px;top:1367.5px;font-size:25px;color:#121826;letter-spacing:0.084px;">Customer Succ...</div>
<div class="t" style="left:2423.0px;top:1367.5px;font-size:25px;color:#121826;letter-spacing:0.578px;">Not Available</div>
<div class="t" style="left:2694.0px;top:1367.5px;font-size:25px;color:#121826;letter-spacing:0.003px;">USA -HO - California</div>
<div class="t" style="left:273.6px;top:1463.5px;font-size:25px;color:#121826;letter-spacing:0.372px;">Mark Scottfield</div>
<div class="t" style="left:533.0px;top:1463.5px;font-size:25px;color:#121826;width:237.5px;overflow:hidden;">kekadocumentation@gmail.com</div>
<div class="t" style="left:802.8px;top:1463.5px;font-size:25px;color:#121826;letter-spacing:0.1px;">Basic</div>
<div class="t" style="left:1074.2px;top:1463.5px;font-size:25px;color:#121826;letter-spacing:-0.15px;">Web</div>
<div class="t" style="left:1344.5px;top:1463.5px;font-size:25px;color:#121826;letter-spacing:-0.918px;">49.37.157.90</div>
<div class="t" style="left:1613.0px;top:1463.5px;font-size:25px;color:#121826;letter-spacing:1.1px;width:204.70000000000005px;overflow:hidden;">04 Nov 2025 11:56 AM</div>
<div class="t" style="left:1883.2px;top:1463.5px;font-size:25px;color:#121826;letter-spacing:0.278px;">Data Analyst</div>
<div class="t" style="left:2153.2px;top:1463.5px;font-size:25px;color:#121826;letter-spacing:0.084px;">Customer Succ...</div>
<div class="t" style="left:2423.0px;top:1463.5px;font-size:25px;color:#121826;letter-spacing:0.578px;">Not Available</div>
<div class="t" style="left:2694.0px;top:1463.5px;font-size:25px;color:#121826;letter-spacing:0.003px;">USA -HO - California</div>
<div class="t" style="left:273.6px;top:1559.5px;font-size:25px;color:#121826;letter-spacing:0.372px;">Mark Scottfield</div>
<div class="t" style="left:533.0px;top:1559.5px;font-size:25px;color:#121826;width:237.5px;overflow:hidden;">kekadocumentation@gmail.com</div>
<div class="t" style="left:802.8px;top:1559.5px;font-size:25px;color:#121826;letter-spacing:0.1px;">Basic</div>
<div class="t" style="left:1074.2px;top:1559.5px;font-size:25px;color:#121826;letter-spacing:-0.15px;">Web</div>
<div class="t" style="left:1344.5px;top:1559.5px;font-size:25px;color:#121826;letter-spacing:-0.931px;">49.207.199.183</div>
<div class="t" style="left:1613.0px;top:1559.5px;font-size:25px;color:#121826;letter-spacing:1.1px;width:204.70000000000005px;overflow:hidden;">04 Nov 2025 09:44 AM</div>
<div class="t" style="left:1883.2px;top:1559.5px;font-size:25px;color:#121826;letter-spacing:0.278px;">Data Analyst</div>
<div class="t" style="left:2153.2px;top:1559.5px;font-size:25px;color:#121826;letter-spacing:0.084px;">Customer Succ...</div>
<div class="t" style="left:2423.0px;top:1559.5px;font-size:25px;color:#121826;letter-spacing:0.578px;">Not Available</div>
<div class="t" style="left:2694.0px;top:1559.5px;font-size:25px;color:#121826;letter-spacing:0.003px;">USA -HO - California</div>
<div class="t" style="left:273.6px;top:1655.5px;font-size:25px;color:#121826;letter-spacing:0.372px;">Mark Scottfield</div>
<div class="t" style="left:533.0px;top:1655.5px;font-size:25px;color:#121826;width:237.5px;overflow:hidden;">kekadocumentation@gmail.com</div>
<div class="t" style="left:802.8px;top:1655.5px;font-size:25px;color:#121826;letter-spacing:0.1px;">Basic</div>
<div class="t" style="left:1074.2px;top:1655.5px;font-size:25px;color:#121826;letter-spacing:-0.15px;">Web</div>
<div class="t" style="left:1342.5px;top:1655.5px;font-size:25px;color:#121826;letter-spacing:-1.489px;">106.215.151.162</div>
<div class="t" style="left:1613.0px;top:1655.5px;font-size:25px;color:#121826;letter-spacing:1.1px;width:204.70000000000005px;overflow:hidden;">04 Nov 2025 12:31 PM</div>
<div class="t" style="left:1883.2px;top:1655.5px;font-size:25px;color:#121826;letter-spacing:0.278px;">Data Analyst</div>
<div class="t" style="left:2153.2px;top:1655.5px;font-size:25px;color:#121826;letter-spacing:0.084px;">Customer Succ...</div>
<div class="t" style="left:2423.0px;top:1655.5px;font-size:25px;color:#121826;letter-spacing:0.578px;">Not Available</div>
<div class="t" style="left:2694.0px;top:1655.5px;font-size:25px;color:#121826;letter-spacing:0.003px;">USA -HO - California</div>
<div class="a" style="left:431px;top:101px;width:186px;height:93.5px;border:7px solid #6A4DF4;border-radius:13px;z-index:10"></div>
<div class="a" style="left:1056px;top:179.5px;width:143px;height:95.0px;border:7px solid #6A4DF4;border-radius:13px;z-index:10"></div>
<div class="a" style="left:517px;top:287px;width:274px;height:127px;border:7px solid #6A4DF4;border-radius:13px;z-index:10"></div>
<div class="a" style="left:228.5px;top:568px;width:1849.0px;height:146px;border:7px solid #6A4DF4;border-radius:13px;z-index:10"></div>
<div class="a" style="left:13px;top:784px;width:193.5px;height:130.5px;border:7px solid #6A4DF4;border-radius:13px;z-index:10"></div>
<div class="a" style="left:2836px;top:1559px;width:96px;height:96px;border-radius:21px;background:#3D4252;z-index:11"></div>
<svg style="left:2836px;top:1559px;z-index:12" width="96" height="96" viewBox="2836 1559 96 96">
<path d="M2899.9 1583.3 Q2901 1590 2907.8 1591 Q2901 1592 2899.9 1598.6 Q2898.8 1592 2892 1591 Q2898.8 1590 2899.9 1583.3Z" fill="#fff"/>
<path d="M2866.2 1582.8 Q2866.8 1588.4 2872.5 1589 Q2866.8 1589.6 2866.2 1595.2 Q2865.6 1589.6 2860 1589 Q2865.6 1588.4 2866.2 1582.8Z" fill="#fff"/>
<path d="M2867 1609 Q2867.4 1612.6 2871 1613 Q2867.4 1613.4 2867 1617 Q2866.6 1613.4 2863 1613 Q2866.6 1612.6 2867 1609Z" fill="#fff"/>
<path d="M2880.5 1601.5 L2897.2 1626.5" stroke="#fff" stroke-width="6.5" stroke-linecap="round"/>
<path d="M2880.2 1600.8 L2883.5 1605.5" stroke="#3D4252" stroke-width="1.4" stroke-linecap="round"/>
</svg>
</body></html>
